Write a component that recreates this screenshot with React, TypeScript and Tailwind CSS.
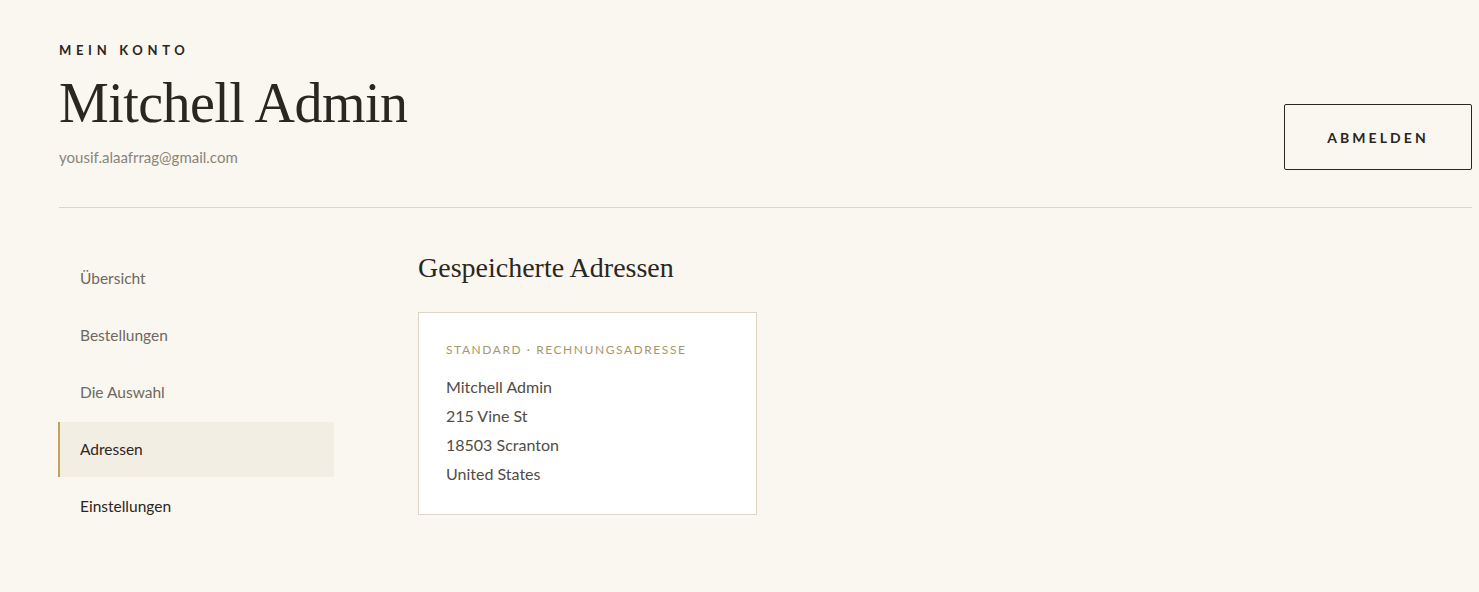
import React from 'react';

const navItems = [
  { label: 'Übersicht', active: false, dark: false },
  { label: 'Bestellungen', active: false, dark: false },
  { label: 'Die Auswahl', active: false, dark: false },
  { label: 'Adressen', active: true, dark: true },
  { label: 'Einstellungen', active: false, dark: true },
];

const addressLines = ['Mitchell Admin', '215 Vine St', '18503 Scranton', 'United States'];

const App: React.FC = () => {
  return (
    <div className="min-h-screen bg-[#faf7f0] pl-[59px] pr-[7px] pt-[44px] font-['Lato','Noto_Sans',sans-serif] text-[#2a2620]">
      <header className="flex items-start justify-between">
        <div>
          <p className="text-[13px] leading-[13px] font-bold tracking-[0.36em] text-[#2a2620]">MEIN KONTO</p>
          <h1 className="mt-[18px] font-['Liberation_Serif',serif] text-[56px] leading-none font-normal text-[#2a2620] tracking-[-0.01em]">
            Mitchell Admin
          </h1>
          <p className="mt-[16px] text-[15px] leading-[20px] font-normal text-[#8a847a]">yousif.alaafrrag@gmail.com</p>
        </div>
        <button className="mt-[60px] h-[66px] w-[188px] rounded-[2px] border border-[#2a2620] text-[14px] font-bold tracking-[0.22em] text-[#2a2620]">
          ABMELDEN
        </button>
      </header>

      <div className="mt-[37px] border-t border-[#dcd6c8]" />

      <div className="flex gap-[84px] pt-[43px]">
        <nav className="-ml-[1px] flex w-[276px] flex-col gap-[2px]">
          {navItems.map(item => (
            <div
              key={item.label}
              className={`flex h-[55px] items-center pl-[20px] text-[15.5px] ${
                item.active ? 'border-l-2 border-[#c4a25e] bg-[#f3eee4]' : 'border-l-2 border-transparent'
              } ${item.dark ? 'text-[#2a2620]' : 'text-[#6e685f]'}`}
            >
              {item.label}
            </div>
          ))}
        </nav>

        <main>
          <h2 className="font-['Liberation_Serif',serif] text-[28px] leading-[36px] text-[#2a2620] -mt-[1px]">
            Gespeicherte Adressen
          </h2>
          <div className="mt-[26px] w-[339px] border border-[#ddd6c5] bg-white px-[27px] pt-[29px] pb-[26px]">
            <p className="text-[12px] leading-[16px] tracking-[0.13em] text-[#a5986c]">STANDARD · RECHNUNGSADRESSE</p>
            <div className="mt-[14px] flex flex-col">
              {addressLines.map(line => (
                <span key={line} className="text-[16px] leading-[29px] font-normal text-[#514c45]">
                  {line}
                </span>
              ))}
            </div>
          </div>
        </main>
      </div>
    </div>
  );
};

export default App;
